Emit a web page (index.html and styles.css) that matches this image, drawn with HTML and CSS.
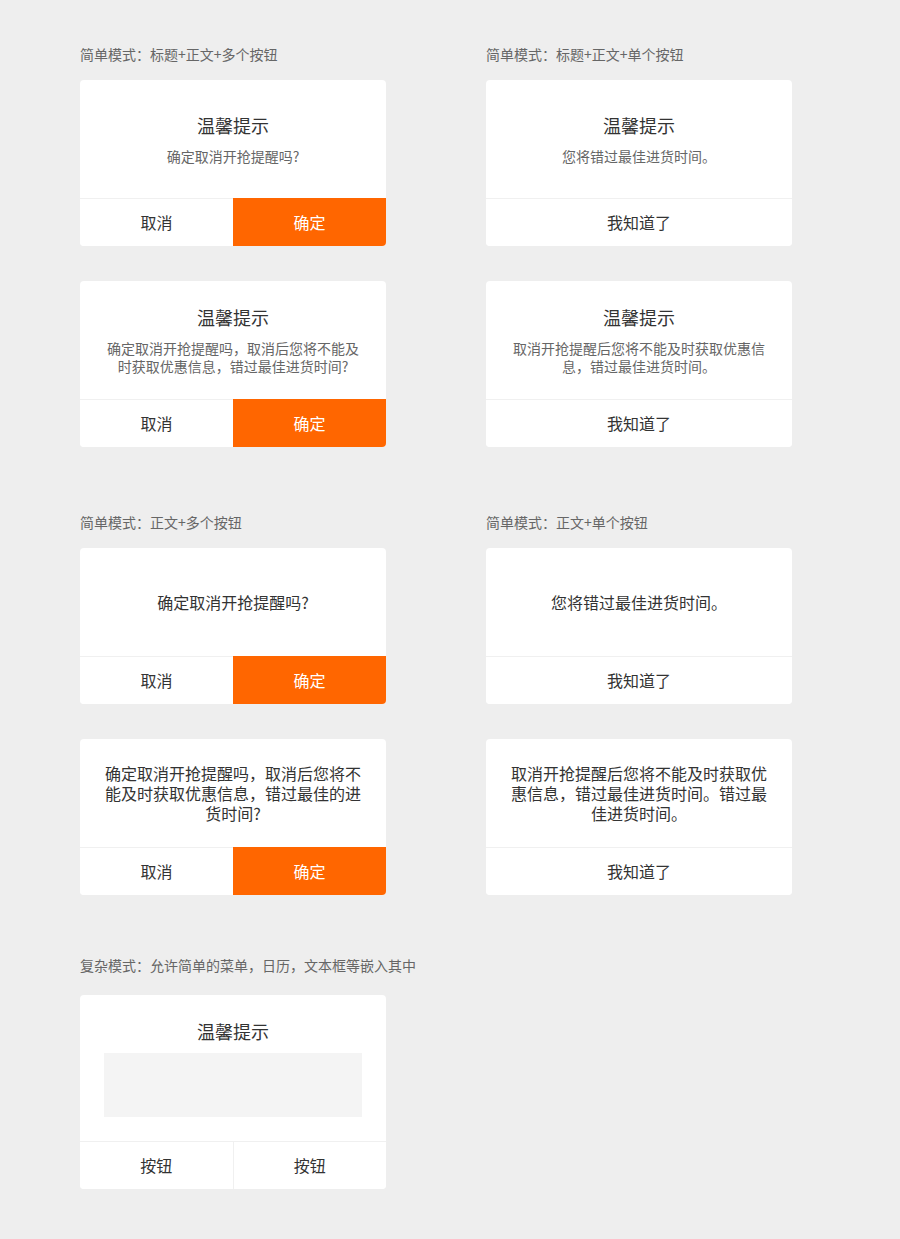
FILE: index.html
```html
<!DOCTYPE html>
<html lang="zh-CN">
<head>
<meta charset="utf-8">
<title>对话框</title>
<link rel="stylesheet" href="styles.css">
</head>
<body>
<main class="page">
  <section class="section">
    <div class="column">
      <div class="label">简单模式：标题+正文+多个按钮</div>
      <div class="dialog">
        <div class="content content--titled">
          <div class="title">温馨提示</div>
          <div class="text">确定取消开抢提醒吗?</div>
        </div>
        <div class="actions">
          <button class="btn">取消</button>
          <button class="btn btn--primary">确定</button>
        </div>
      </div>
      <div class="dialog">
        <div class="content content--titled">
          <div class="title">温馨提示</div>
          <div class="text">确定取消开抢提醒吗，取消后您将不能及时获取优惠信息，错过最佳进货时间?</div>
        </div>
        <div class="actions">
          <button class="btn">取消</button>
          <button class="btn btn--primary">确定</button>
        </div>
      </div>
    </div>
    <div class="column">
      <div class="label">简单模式：标题+正文+单个按钮</div>
      <div class="dialog">
        <div class="content content--titled">
          <div class="title">温馨提示</div>
          <div class="text">您将错过最佳进货时间。</div>
        </div>
        <div class="actions">
          <button class="btn">我知道了</button>
        </div>
      </div>
      <div class="dialog">
        <div class="content content--titled">
          <div class="title">温馨提示</div>
          <div class="text">取消开抢提醒后您将不能及时获取优惠信息，错过最佳进货时间。</div>
        </div>
        <div class="actions">
          <button class="btn">我知道了</button>
        </div>
      </div>
    </div>
  </section>

  <section class="section section--middle">
    <div class="column">
      <div class="label">简单模式：正文+多个按钮</div>
      <div class="dialog">
        <div class="content content--plain">
          <div class="text text--large">确定取消开抢提醒吗?</div>
        </div>
        <div class="actions">
          <button class="btn">取消</button>
          <button class="btn btn--primary">确定</button>
        </div>
      </div>
      <div class="dialog">
        <div class="content content--plain">
          <div class="text text--large">确定取消开抢提醒吗，取消后您将不能及时获取优惠信息，错过最佳的进货时间?</div>
        </div>
        <div class="actions">
          <button class="btn">取消</button>
          <button class="btn btn--primary">确定</button>
        </div>
      </div>
    </div>
    <div class="column">
      <div class="label">简单模式：正文+单个按钮</div>
      <div class="dialog">
        <div class="content content--plain">
          <div class="text text--large">您将错过最佳进货时间。</div>
        </div>
        <div class="actions">
          <button class="btn">我知道了</button>
        </div>
      </div>
      <div class="dialog">
        <div class="content content--plain">
          <div class="text text--large">取消开抢提醒后您将不能及时获取优惠信息，错过最佳进货时间。错过最佳进货时间。</div>
        </div>
        <div class="actions">
          <button class="btn">我知道了</button>
        </div>
      </div>
    </div>
  </section>

  <section class="section section--last">
    <div class="column">
      <div class="label">复杂模式：允许简单的菜单，日历，文本框等嵌入其中</div>
      <div class="dialog">
        <div class="content content--complex">
          <div class="title">温馨提示</div>
          <div class="slot"></div>
        </div>
        <div class="actions">
          <button class="btn">按钮</button>
          <button class="btn btn--split">按钮</button>
        </div>
      </div>
    </div>
  </section>
</main>
</body>
</html>
```

FILE: styles.css
```css
* {
  box-sizing: border-box;
}

html, body {
  margin: 0;
  padding: 0;
  background: #eeeeee;
}

body {
  font-family: "Noto Sans CJK SC", "Noto Sans", sans-serif;
  color: #333333;
}

.page {
  padding: 44px 80px 50px;
}

.section {
  display: grid;
  grid-template-columns: 306px 306px;
  column-gap: 100px;
  margin-bottom: 65px;
}

.section--middle {
  margin-bottom: 60px;
}

.section--last {
  margin-bottom: 0;
}

.column {
  display: flex;
  flex-direction: column;
  gap: 35px;
  min-width: 0;
}

.label {
  font-size: 14px;
  line-height: 20px;
  height: 20px;
  color: #666666;
  white-space: nowrap;
  margin-bottom: -19px;
}

.section--last .label {
  margin-bottom: -15px;
}

.dialog {
  background: #ffffff;
  border-radius: 4px;
  overflow: hidden;
  display: flex;
  flex-direction: column;
}

.content {
  padding: 24px;
  display: flex;
  flex-direction: column;
  justify-content: center;
  align-items: stretch;
  text-align: center;
}

.content--titled {
  min-height: 118px;
}

.content--plain {
  min-height: 108px;
}

.title {
  font-size: 18px;
  line-height: 24px;
  color: #333333;
}

.text {
  margin-top: 10px;
  font-size: 14px;
  line-height: 18px;
  color: #666666;
}

.text--large {
  margin-top: 0;
  font-size: 16px;
  line-height: 20px;
  color: #333333;
}

.slot {
  margin-top: 10px;
  height: 64px;
  background: #f4f4f4;
}

.actions {
  display: flex;
  border-top: 1px solid #f0f0f0;
  height: 48px;
}

.btn {
  flex: 1 1 0;
  border: 0;
  margin: 0;
  padding: 0;
  background: #ffffff;
  font-family: inherit;
  font-size: 16px;
  color: #333333;
  height: 47px;
  line-height: 47px;
}

.btn--primary {
  background: #ff6600;
  color: #ffffff;
  height: 48px;
  margin-top: -1px;
  line-height: 48px;
}

.btn--split {
  border-left: 1px solid #f0f0f0;
}
```
